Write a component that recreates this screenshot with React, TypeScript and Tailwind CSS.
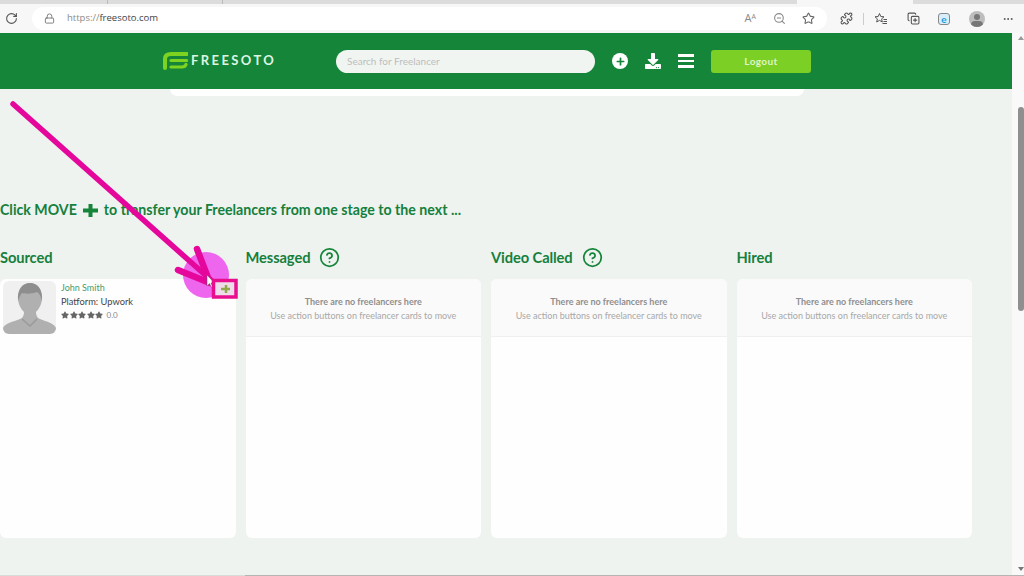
import { CircleHelp, CopyPlus, Lock, MoreHorizontal, Puzzle, RotateCw, Star, ZoomOut } from 'lucide-react';
import { FaDownload, FaStar, FaPlus } from 'react-icons/fa';

const font = { fontFamily: 'Lato, "Open Sans", sans-serif' };

function Logo() {
  return (
    <svg width="26" height="18" viewBox="0 0 26 18" fill="none">
      <path d="M25 2H9C5 2 3 4 3 7v9" stroke="#7ed321" strokeWidth="4" strokeLinecap="round" />
      <path d="M9 8.500h15.500" stroke="#7ed321" strokeWidth="3.200" strokeLinecap="round" />
      <path d="M9 15h11c2.500 0 3.500-1 4-2.500" stroke="#7ed321" strokeWidth="3.200" strokeLinecap="round" />
    </svg>
  );
}

function Avatar() {
  return (
    <div className="w-[53px] h-[53px] rounded-md bg-[#f0f0f0] overflow-hidden shrink-0">
      <svg width="53" height="53" viewBox="0 0 53 53">
        <path d="M0 53v-6c2-5 10-6 17-9 3-1 4-4 4-7-3-3-6-8-6-14C15 7 20 2 27 2s12 5 12 15c0 6-3 11-6 14 0 3 1 6 4 7 7 3 14 4 16 9v6z" fill="#b0b0b0" />
        <path d="M15 20C14 8 20 2 27 2s13 6 12 18c-1-5-3-8-5-9-5 2-12 2-15 1-2 2-3 5-4 8z" fill="#8e8e8e" />
        <path d="M19 38l8 7 7-7" stroke="#9a9a9a" strokeWidth="1.500" fill="none" />
      </svg>
    </div>
  );
}

function Stars() {
  return (
    <div className="flex items-center gap-[0.5px] text-[#666]">
      <FaStar size={8} />
      <FaStar size={8} />
      <FaStar size={8} />
      <FaStar size={8} />
      <FaStar size={8} />
      <span className="ml-[3px] text-[8px] text-[#888]">0.0</span>
    </div>
  );
}

function EmptyColumn({ title, help }: { title: string; help?: boolean }) {
  return (
    <div>
      <div className="h-[22px] flex items-center gap-[9px] mb-[11px]">
        <span className="text-[14.700px] font-bold text-[#15803d] tracking-[-0.1px]">{title}</span>
        {help && <CircleHelp size={21} strokeWidth={2} className="text-[#15853a]" />}
      </div>
      <div className="h-[259px] bg-[#fefefe] rounded-md">
        <div className="h-[58px] bg-[#fafafa] rounded-t-md border-b border-[#f0f0f0] flex flex-col items-center pt-[16px]">
          <div className="text-[9px] leading-[13px] font-bold text-[#8f8f8f]">There are no freelancers here</div>
          <div className="text-[9px] leading-[13px] mt-[1px] text-[#a8a8a8]">Use action buttons on freelancer cards to move</div>
        </div>
      </div>
    </div>
  );
}

export default function App() {
  return (
    <div className="relative w-[1024px] h-[576px] overflow-hidden bg-[#f9f9f9] flex flex-col" style={font}>
      {/* browser tabs */}
      <div className="h-[4px] flex bg-[#dcdcdc]">
        <div className="w-[108px] border-r border-[#bbb]" />
        <div className="w-[115px] border-r border-[#bbb]" />
        <div className="w-[574px]" />
        <div className="w-[116px] bg-[#f7f7f7]" />
      </div>

      {/* browser toolbar */}
      <div className="h-[29px] bg-[#f7f7f7] flex items-center text-[#555]">
        <RotateCw size={13} className="ml-[5px]" />
        <div className="ml-[14px] w-[795px] h-[23px] bg-white rounded-full flex items-center">
          <Lock size={11} className="ml-[12px] text-[#777]" />
          <span className="ml-[12px] text-[9.500px] text-[#8a8a8a]" style={{ fontFamily: '"Open Sans", sans-serif' }}>
            https://<span className="text-[#444]">freesoto.com</span>
          </span>
          <span className="ml-auto text-[11px] text-[#888]" style={{ fontFamily: '"Open Sans", sans-serif' }}>
            A<sup className="text-[7px]">A</sup>
          </span>
          <ZoomOut size={13} className="ml-[17px] text-[#888]" />
          <Star size={13} className="ml-[16px] mr-[12px] text-[#666]" />
        </div>
        <Puzzle size={13} className="ml-[13px]" />
        <div className="ml-[10px] w-px h-[12px] bg-[#ccc]" />
        <svg width="14" height="14" viewBox="0 0 14 14" fill="none" stroke="currentColor" strokeWidth="1" className="ml-[10px]">
          <path d="M5.500 1.500l1.300 3 3.200.3-2.400 2.100.7 3.100-2.800-1.600-2.800 1.600.7-3.100L1 4.800l3.200-.3z" />
          <path d="M9.500 7.500H13M9.500 9.500H13M8.500 11.500H13" />
        </svg>
        <CopyPlus size={13} className="ml-[19px]" />
        <div className="ml-[18px] w-[12px] h-[12px] rounded-[3px] border border-[#888] bg-[#d8eefa] text-[#1f9bd8] text-[10px] font-bold leading-[10px] text-center">e</div>
        <div className="ml-[19px] relative w-[16px] h-[16px] rounded-full bg-[#bdbdbd] overflow-hidden">
          <div className="absolute left-[5px] top-[3px] w-[6px] h-[6px] rounded-full bg-[#777]" />
          <div className="absolute left-[2px] top-[10px] w-[12px] h-[8px] rounded-full bg-[#777]" />
        </div>
        <MoreHorizontal size={12} className="ml-[17px]" />
      </div>

      <div className="flex-1 flex min-h-0">
        {/* page */}
        <div className="w-[1013px] bg-[#eef3ef] flex flex-col">
          <div className="h-[56px] shrink-0 bg-[#15853a] flex items-center pl-[162px]">
            <Logo />
            <span className="ml-[3px] w-[84px] text-[13px] font-bold tracking-[2.400px] text-[#dff5e3]">FREESOTO</span>
            <div className="ml-[61px] w-[259px] h-[23px] rounded-full bg-[#f1f5f2] flex items-center pl-[11px] text-[10px] text-[#bdbdbd]">
              Search for Freelancer
            </div>
            <div className="ml-[17px] w-[16px] h-[16px] rounded-full bg-white flex items-center justify-center text-[#15853a]">
              <FaPlus size={9} />
            </div>
            <FaDownload size={16} className="ml-[17px] text-white" />
            <div className="ml-[17px] w-[16px] flex flex-col gap-[3px]">
              <div className="h-[2.500px] bg-white" />
              <div className="h-[2.500px] bg-white" />
              <div className="h-[2.500px] bg-white" />
            </div>
            <div className="ml-[17px] w-[100px] h-[23px] rounded-[3px] bg-[#7bcf25] flex items-center justify-center text-[10px] font-bold tracking-[0.4px] text-[#dff5c8]">
              Logout
            </div>
          </div>

          <div className="ml-[170px] w-[634px] h-[7px] bg-white rounded-b-lg shrink-0" />

          <div className="mt-[106px] h-[16px] flex items-center text-[14.180px] font-bold text-[#15803d] leading-none whitespace-nowrap">
            Click MOVE
            <svg width="15" height="15" viewBox="0 0 15 15" className="ml-[6px] mr-[6px] text-[#15853a]">
              <path d="M5.500 1h4v4.500H15v4H9.500V14h-4V9.500H0v-4h5.500z" fill="currentColor" />
            </svg>
            to transfer your Freelancers from one stage to the next ...
          </div>

          <div className="mt-[28px] w-[972px] grid grid-cols-4 gap-x-[10px]">
            <div>
              <div className="h-[22px] flex items-center mb-[11px]">
                <span className="text-[14.700px] font-bold text-[#15803d] tracking-[-0.1px]">Sourced</span>
              </div>
              <div className="h-[259px] bg-[#fefefe] rounded-md flex items-start pt-[2px] pl-[3px]">
                <Avatar />
                <div className="ml-[5px]">
                  <div className="text-[9px] leading-[12px] mt-[1px] text-[#4a9a68]">John Smith</div>
                  <div className="text-[9.300px] leading-[12px] mt-[2px] text-[#444]">Platform: Upwork</div>
                  <div className="mt-[1px]">
                    <Stars />
                  </div>
                </div>
              </div>
            </div>
            <EmptyColumn title="Messaged" help />
            <EmptyColumn title="Video Called" help />
            <EmptyColumn title="Hired" />
          </div>
        </div>

        {/* page scrollbar */}
        <div className="flex-1 flex flex-col items-center pt-[3px]">
          <div className="ml-[6px] w-0 h-0 border-x-[3px] border-x-transparent border-b-[4px] border-b-[#999]" />
          <div className="ml-[6px] mt-[67px] w-[6px] h-[204px] rounded-full bg-[#8f8f8f]" />
          <div className="ml-[6px] mt-auto mb-[4px] w-0 h-0 border-x-[3px] border-x-transparent border-t-[4px] border-t-[#777]" />
        </div>
      </div>

      <div className="h-[1px] shrink-0 flex">
        <div className="w-[245px] bg-[#d8dcd9]" />
        <div className="flex-1 bg-[#b5b5b5]" />
      </div>

      {/* video annotation over the page */}
      <svg className="absolute left-0 top-0 pointer-events-none" width="1024" height="576" viewBox="0 0 1024 576">
        <circle cx="206" cy="275" r="23" fill="#ee66ee" />
        <path d="M13 104 212 281" stroke="#e5079b" strokeWidth="5.500" strokeLinecap="round" />
        <path d="M197 249 210 283 178 270" stroke="#e5079b" strokeWidth="6.500" strokeLinecap="round" strokeLinejoin="round" fill="none" />
        <path d="M207 275v11l2.500-2.500 2 4 1.500-.8-2-3.700h3.500z" fill="#fff" stroke="#555" strokeWidth=".5" />
        <rect x="213.500" y="280.500" width="22.500" height="16.500" fill="#efdcea" stroke="#e80f8e" strokeWidth="3.500" />
        <path d="M221 289h9M226 285v8" stroke="#8fa84a" strokeWidth="2.500" />
      </svg>
    </div>
  );
}
